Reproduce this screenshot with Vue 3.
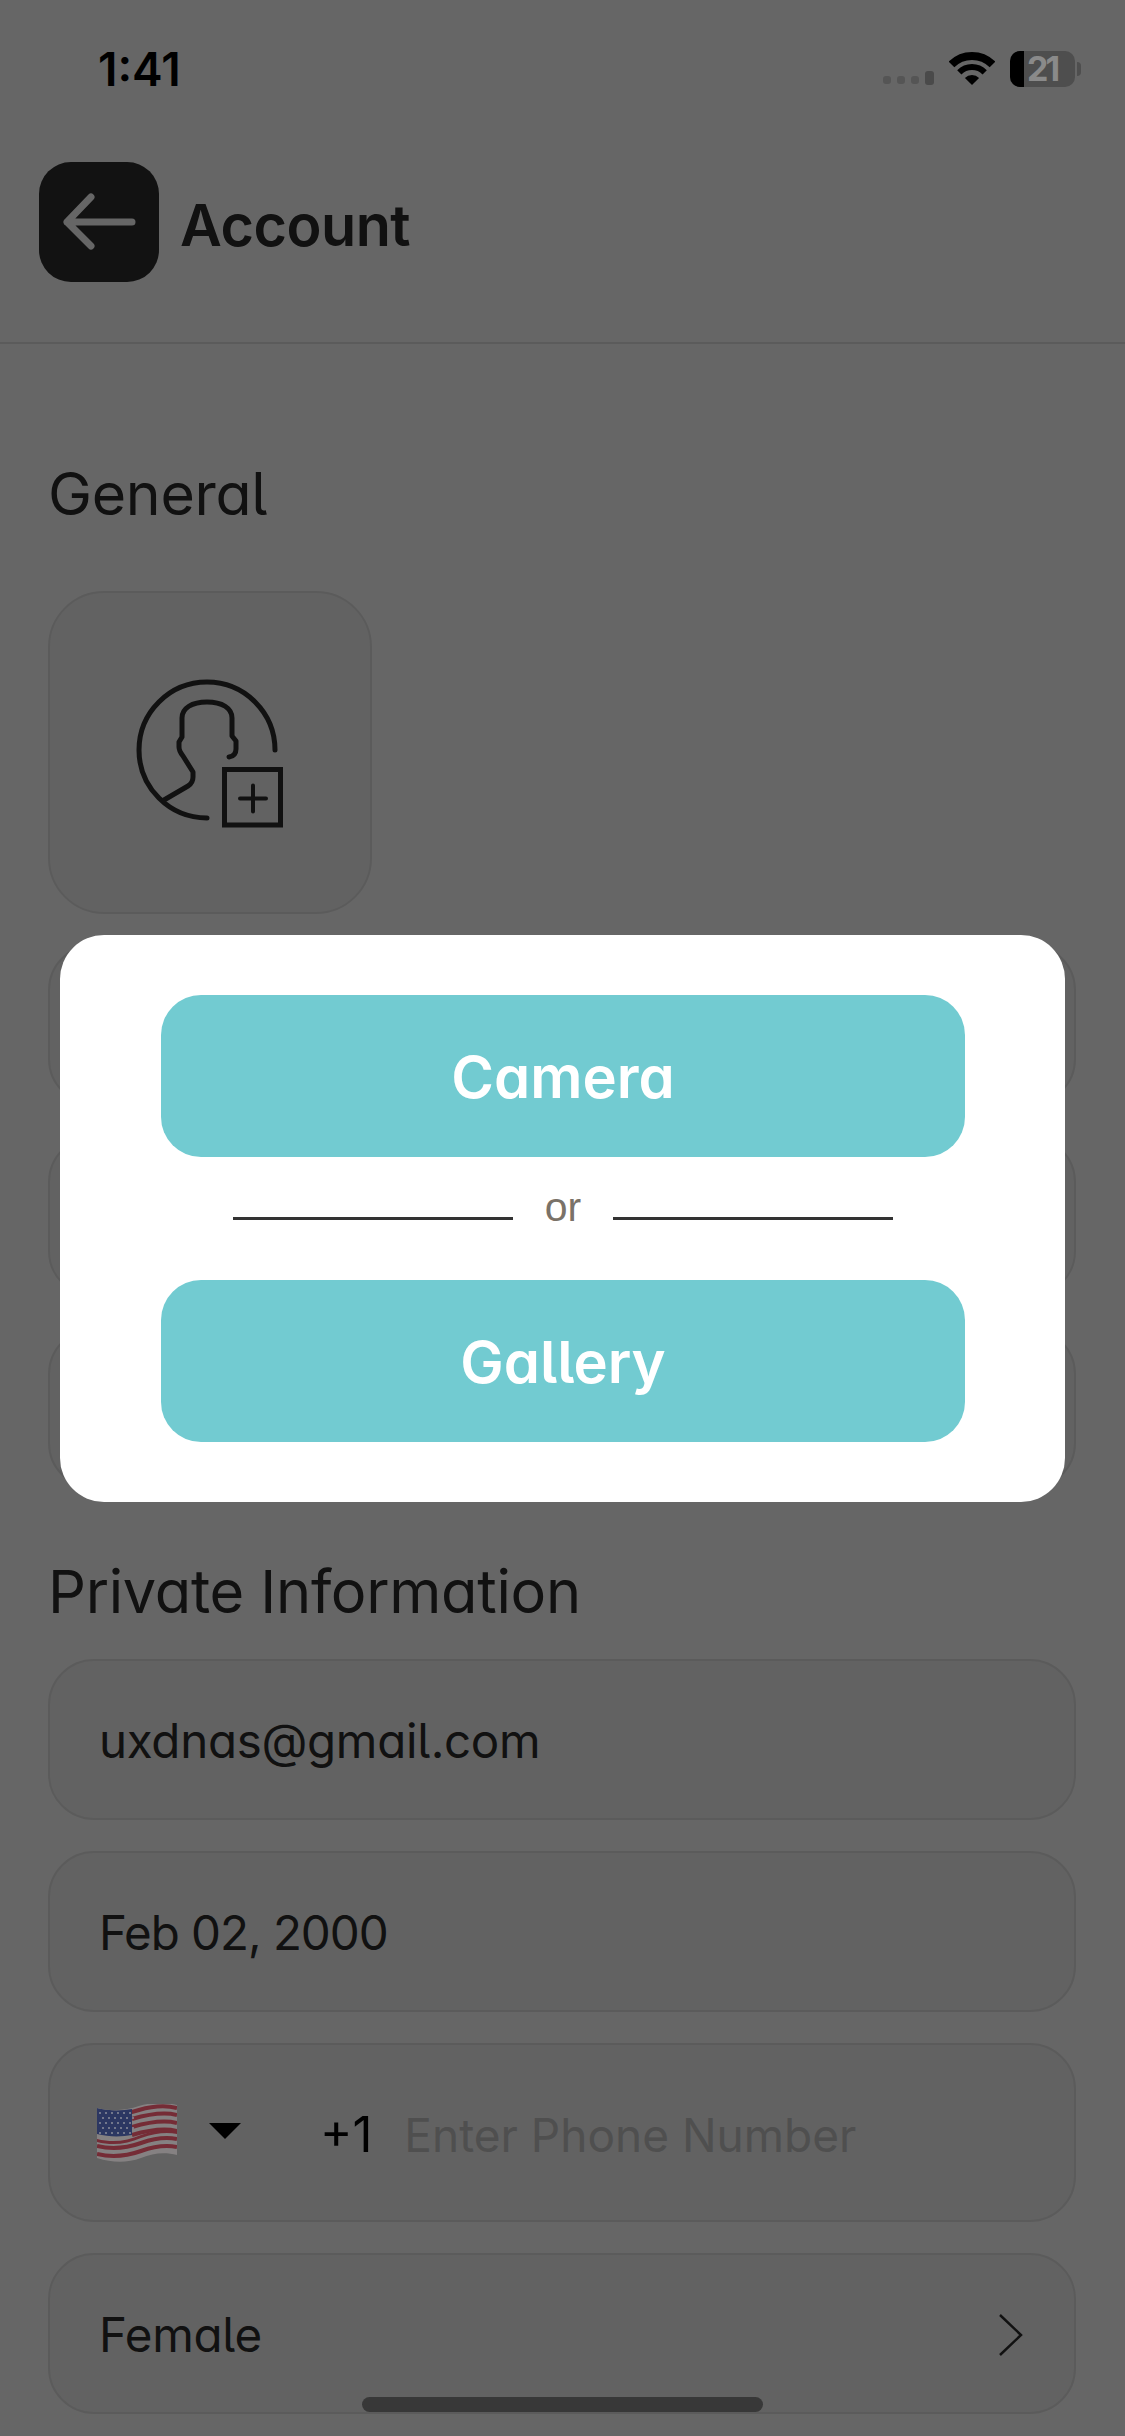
<script setup>
const stripes = [
  'M96 112 C112 116 126 114 138 110 C152 106 164 105 176 108',
  'M131 119 C148 114 164 112 176 115',
  'M131 127 C148 122 164 120 176 123',
  'M131 135 C148 130 164 128 176 131',
  'M96 146 C112 150 126 148 140 143 C154 138 166 137 176 139',
  'M96 154 C112 158 126 156 140 151 C154 146 166 145 176 147'
]
const stars = []
for (let r = 0; r < 5; r++) {
  for (let c = 0; c < 6; c++) {
    stars.push({ x: 99 + c * 6 + (r % 2) * 3, y: 113 + r * 5 })
  }
}
</script>

<template>
  <div class="page">
    <div class="status">
      <span class="time">1:41</span>
      <div class="status-icons">
        <div class="signal">
          <i class="dot"></i><i class="dot"></i><i class="dot"></i><i class="bar"></i>
        </div>
        <svg class="wifi" width="46" height="33" viewBox="0 0 46 33">
          <path d="M23 33 L15.9 25.9 A10 10 0 0 1 30.1 25.9 Z" fill="#000" />
          <path d="M10.3 20.3 A18 18 0 0 1 35.7 20.3" fill="none" stroke="#000" stroke-width="6" />
          <path d="M2.5 12.5 A29 29 0 0 1 43.5 12.5" fill="none" stroke="#000" stroke-width="8" />
        </svg>
        <div class="battery">
          <div class="battery-body"><span class="battery-fill"></span><span class="battery-num">21</span></div>
          <span class="battery-cap"></span>
        </div>
      </div>
    </div>

    <header class="header">
      <button class="back" aria-label="Back">
        <svg width="120" height="120" viewBox="0 0 120 120">
          <path d="M93 60 H28 M52 35 L28 60 L52 84" fill="none" stroke="#fff" stroke-width="7" stroke-linecap="round" stroke-linejoin="round" />
        </svg>
      </button>
      <h1 class="title">Account</h1>
    </header>

    <main class="content">
      <h2 class="section first">General</h2>
      <div class="avatar">
        <svg width="160" height="160" viewBox="130 672 160 160" fill="none" stroke="#2b2b2b" stroke-width="5" stroke-linecap="round" stroke-linejoin="round">
          <path d="M275 749 A68 68 0 1 0 207 817" />
          <path d="M164 799 L188 785 Q193 782 193 776 L193 771 L183 755 Q179 750 179 746 L179 741 L182 736 L182 717 C182 707 192 701 207 701 C222 701 232 707 232 717 L232 735 L236 740 L236 748 Q236 755 229 756" />
          <rect x="224.5" y="768.5" width="56" height="55.5" stroke-linejoin="miter" />
          <path d="M240 797.5 H266 M253 784.5 V810.5" stroke-width="4" />
        </svg>
      </div>
      <div class="field"></div>
      <div class="field"></div>
      <div class="field"></div>

      <h2 class="section second">Private Information</h2>
      <div class="field text">uxdnas@gmail.com</div>
      <div class="field text date">Feb 02, 2000</div>
      <div class="field phone">
        <svg class="flag" width="82" height="58" viewBox="95 104 82 58">
          <defs>
            <clipPath id="flagClip">
              <path d="M96 108 C112 112 126 110 138 106 C152 102 164 102 176 105 L176 155 C164 152 152 153 140 158 C126 163 112 163 96 158 Z" />
            </clipPath>
          </defs>
          <g clip-path="url(#flagClip)">
            <rect x="95" y="100" width="82" height="64" fill="#858182" />
            <path d="M96 139 C112 143 126 141 140 135 C154 130 166 129 176 131 L176 134 C166 132 154 133 140 138 C126 144 112 146 96 142 Z" fill="#752c36" />
            <path v-for="d in stripes" :key="d" :d="d" fill="none" stroke="#752c36" stroke-width="4" />
            <path d="M96 108 C108 111 120 111 131 109 L131 135 C120 137 108 137 96 134 Z" fill="#2c3762" />
            <circle v-for="s in stars" :key="s.x + '-' + s.y" :cx="s.x" :cy="s.y" r="1.1" fill="#858896" />
          </g>
        </svg>
        <span class="caret"></span>
        <span class="dial">+1</span>
        <span class="placeholder">Enter Phone Number</span>
      </div>
      <div class="field text gender">
        <span>Female</span>
        <svg width="26" height="44" viewBox="0 0 26 44">
          <path d="M2 2 L23 22 L2 42" fill="none" stroke="#2b2b2b" stroke-width="2.5" />
        </svg>
      </div>
    </main>

    <div class="home-bar"></div>

    <div class="scrim">
      <div class="modal">
        <button class="action">Camera</button>
        <div class="divider">
          <span class="rule"></span>
          <span class="or">or</span>
          <span class="rule"></span>
        </div>
        <button class="action">Gallery</button>
      </div>
    </div>
  </div>
</template>

<style scoped>
.page {
  position: relative;
  width: 1125px;
  height: 2436px;
  overflow: hidden;
  background: #fff;
  color: #2b2b2b;
  font-family: Inter, "Liberation Sans", sans-serif;
  font-feature-settings: "cv05", "cv11";
}
.status {
  position: relative;
  z-index: 2;
  height: 118px;
  display: flex;
  justify-content: space-between;
  align-items: flex-start;
  padding: 0 44px 0 98px;
  box-sizing: border-box;
  color: #000;
}
.time {
  margin-top: 42px;
  font-size: 46px;
  line-height: 54px;
  font-weight: 600;
  font-feature-settings: normal;
}
.status-icons {
  display: flex;
  align-items: flex-start;
  margin-top: 51px;
}
.signal {
  display: flex;
  align-items: flex-end;
  gap: 6px;
  height: 34px;
  margin-right: 15px;
}
.dot {
  width: 8px;
  height: 8px;
  margin-bottom: 1px;
  border-radius: 3px;
  background: #555;
}
.bar {
  width: 9px;
  height: 14px;
  border-radius: 3px;
  background: #4a4a4a;
}
.wifi {
  margin: 1px 15px 0 0;
}
.battery {
  display: flex;
  align-items: center;
}
.battery-body {
  position: relative;
  width: 65px;
  height: 36px;
  border-radius: 10px;
  background: #4e4e4e;
  display: flex;
  align-items: center;
  padding-left: 17px;
  box-sizing: border-box;
}
.battery-fill {
  position: absolute;
  left: 0;
  top: 0;
  bottom: 0;
  width: 14px;
  border-radius: 10px 0 0 10px;
  background: #000;
}
.battery-num {
  position: relative;
  font-size: 34px;
  line-height: 36px;
  font-weight: 700;
  letter-spacing: -3px;
  color: #8a8a8a;
  font-feature-settings: normal;
}
.battery-cap {
  width: 4px;
  height: 14px;
  margin-left: 2px;
  border-radius: 0 4px 4px 0;
  background: #4e4e4e;
}
.header {
  height: 226px;
  box-sizing: border-box;
  display: flex;
  align-items: flex-start;
  padding: 44px 0 0 39px;
  border-bottom: 2px solid #e4e4e4;
}
.back {
  width: 120px;
  height: 120px;
  padding: 0;
  border: 0;
  border-radius: 32px;
  background: #2d2d2d;
  flex: none;
}
.back svg {
  display: block;
}
.title {
  margin: 33px 0 0 21px;
  font-size: 57.5px;
  line-height: 60px;
  font-weight: 600;
  letter-spacing: -0.5px;
}
.content {
  padding: 0 49px 0 48px;
  display: flex;
  flex-direction: column;
}
.section {
  margin: 0;
  font-size: 59px;
  line-height: 60px;
  font-weight: 400;
  letter-spacing: -0.3px;
}
.section.first {
  margin-top: 120px;
  margin-bottom: 67px;
}
.section.second {
  margin-top: 41px;
  margin-bottom: 38px;
  font-size: 59.5px;
}
.avatar {
  width: 324px;
  height: 323px;
  box-sizing: border-box;
  border: 2px solid #e4e4e4;
  border-radius: 56px;
  background: #f5f5f5;
  display: flex;
  align-items: center;
  justify-content: center;
  margin-bottom: 30px;
}
.field {
  height: 161px;
  flex: none;
  box-sizing: border-box;
  border: 2px solid #e4e4e4;
  border-radius: 46px;
  background: #f5f5f5;
  margin-bottom: 31px;
}
.field.text {
  display: flex;
  align-items: center;
  padding-top: 2px;
  padding-left: 49px;
  font-size: 47.5px;
  letter-spacing: -0.3px;
}
.field.date {
  letter-spacing: -1.05px;
}
.field.gender {
  justify-content: space-between;
  padding-right: 50px;
  margin-bottom: 0;
}
.field.phone {
  height: 179px;
  display: flex;
  align-items: center;
  padding-left: 46px;
}
.flag {
  position: relative;
  z-index: 2;
  flex: none;
}
.caret {
  position: relative;
  z-index: 2;
  width: 0;
  height: 0;
  margin: 0 0 4px 31px;
  border-left: 16px solid transparent;
  border-right: 16px solid transparent;
  border-top: 16px solid #000;
}
.dial {
  margin: 4px 0 0 79px;
  font-size: 49px;
  color: #000;
  font-feature-settings: normal;
}
.placeholder {
  margin: 4px 0 0 32px;
  font-size: 46px;
  color: #c5c5c5;
  font-feature-settings: normal;
}
.home-bar {
  position: absolute;
  left: 362px;
  top: 2397px;
  width: 401px;
  height: 15px;
  border-radius: 8px;
  background: #8c8c8c;
}
.scrim {
  position: absolute;
  inset: 0;
  z-index: 1;
  background: rgba(0, 0, 0, 0.6);
  display: flex;
  align-items: center;
  justify-content: center;
}
.modal {
  width: 1005px;
  height: 567px;
  box-sizing: border-box;
  padding: 60px 100px 60px 101px;
  border-radius: 44px;
  background: #fff;
  display: flex;
  flex-direction: column;
}
.action {
  height: 162px;
  flex: none;
  border: 0;
  padding: 3px 0 0;
  border-radius: 40px;
  background: #72cbd1;
  color: #fff;
  font-family: inherit;
  font-feature-settings: inherit;
  font-size: 58px;
  font-weight: 600;
  letter-spacing: 0;
}
.divider {
  flex: 1;
  display: flex;
  align-items: center;
  gap: 32px;
  padding: 0 72px;
}
.rule {
  flex: 1;
  height: 3px;
  background: #333;
}
.or {
  margin-bottom: 22px;
  font-family: "Liberation Sans", sans-serif;
  font-size: 41px;
  line-height: 48px;
  color: #7a7268;
}
</style>
